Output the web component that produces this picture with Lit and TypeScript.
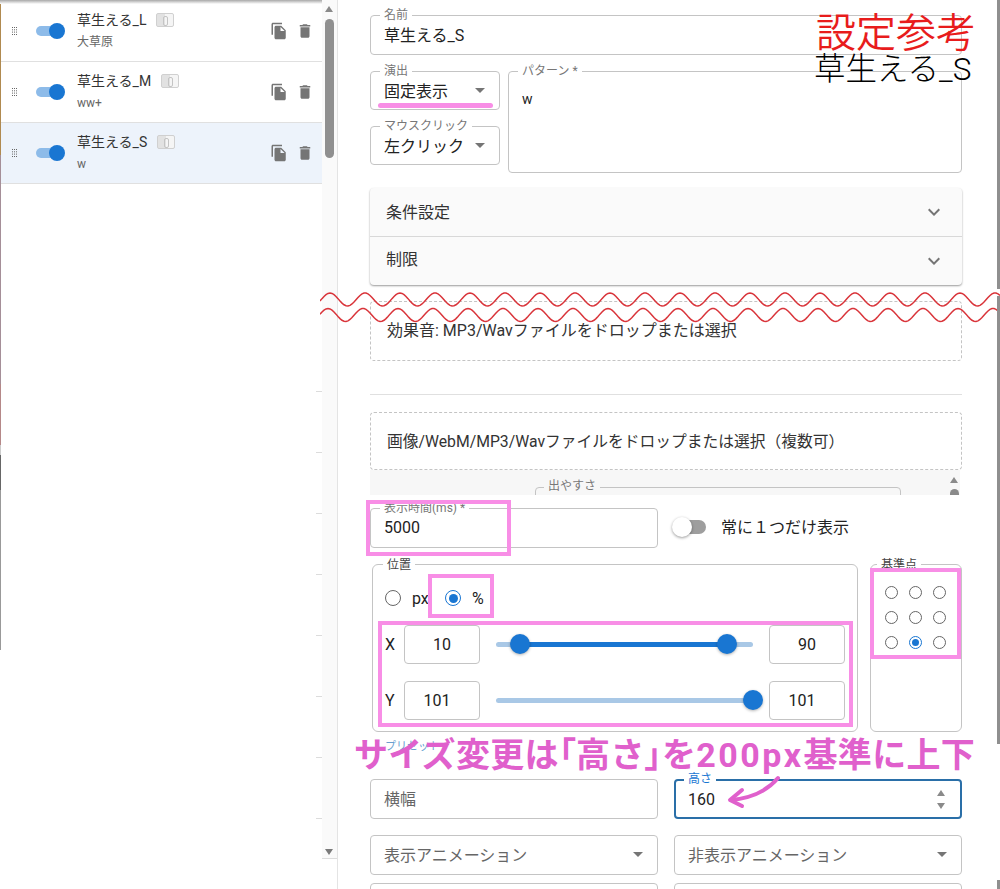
import { LitElement, html, css, svg, nothing } from 'lit'
import { customElement } from 'lit/decorators.js'

const rows = [
  { name: '草生える_L', sub: '大草原', active: false },
  { name: '草生える_M', sub: 'ww+', active: false },
  { name: '草生える_S', sub: 'w', active: true },
]

const wave = (center: number, peakAt: number) => {
  let d = ''
  for (let x = 320; x <= 1000; x += 2) {
    const y = center - 6.5 * Math.cos(((x - peakAt) / 35) * Math.PI * 2)
    d += `${d ? 'L' : 'M'}${x - 320} ${(y - 288).toFixed(2)}`
  }
  return d
}

const sliderPos = (v: number) => Math.min(100, v * 1.0075 - 0.74)

@customElement('app-root')
export class AppRoot extends LitElement {
  static styles = css`
    :host {
      display: flex;
      position: relative;
      width: 1000px;
      height: 889px;
      overflow: hidden;
      background: #fff;
      color: #222;
      font-family: Roboto, "Noto Sans CJK JP", sans-serif;
      font-size: 16px;
    }
    * { box-sizing: border-box; }

    /* left list */
    .side {
      position: relative;
      display: flex;
      width: 338px;
      height: 889px;
      flex: none;
      border-right: 1px solid #e4e4e4;
    }
    .side::before {
      content: '';
      position: absolute;
      top: 0;
      left: 0;
      width: 322px;
      height: 4px;
      background: linear-gradient(#a8a8a8, #fff);
    }
    .edge {
      position: absolute;
      top: 4px;
      left: 0;
      width: 1px;
      height: 646px;
      background: linear-gradient(#b08a50 0 151px, #a58f98 151px 380px, #b58888 380px 441px, #ccc 441px 451px, #666 451px 486px, #999 486px);
    }
    .list {
      width: 322px;
      padding-top: 1px;
      display: flex;
      flex-direction: column;
    }
    .row {
      display: flex;
      align-items: center;
      height: 61px;
      flex: none;
      padding: 0 8px 0 12px;
      border-bottom: 1px solid #e0e0e0;
    }
    .row.active { background: #edf3fb; }
    .grip { width: 5px; height: 8px; flex: none; }
    .switch {
      position: relative;
      width: 29px;
      height: 16px;
      margin-left: 19px;
      flex: none;
    }
    .switch .track {
      position: absolute;
      top: 3px;
      left: 0;
      width: 24px;
      height: 10px;
      border-radius: 5px;
      background: #8dbbe9;
    }
    .switch .knob {
      position: absolute;
      top: 0;
      right: 0;
      width: 16px;
      height: 16px;
      border-radius: 50%;
      background: #1976d2;
    }
    .row-text { margin-left: 12px; margin-top: -2px; }
    .row-name {
      display: flex;
      align-items: center;
      gap: 10px;
      font-size: 14px;
      line-height: 20px;
      color: #333;
    }
    .row-sub { font-size: 12px; line-height: 16px; margin-top: 4px; color: #666; }
    .thumb {
      position: relative;
      width: 18px;
      height: 14px;
      border: 1px solid #d0d0d0;
      border-radius: 2px;
      background: linear-gradient(90deg, #e2e2e2 0 50%, #f5f5f5 50%);
    }
    .thumb::after {
      content: '';
      position: absolute;
      left: 6px;
      top: 2px;
      width: 3px;
      height: 8px;
      border: 1px solid #c4c4c4;
      border-radius: 2px;
    }
    .actions { display: flex; gap: 8px; margin-left: auto; }
    .actions svg { width: 18px; height: 18px; fill: #757575; display: block; }
    .ticks { display: flex; flex-direction: column; align-items: flex-end; margin-top: 207px; }
    .ticks span { width: 6px; height: 1px; margin-bottom: 60px; background: #dcdcdc; flex: none; }
    .rail {
      width: 15px;
      height: 859px;
      display: flex;
      flex-direction: column;
      align-items: center;
      padding: 6px 1px 3px 0;
      background: #fafafa;
      border-bottom: 1px solid #dcdcdc;
    }
    .arrow-up, .arrow-down {
      width: 0;
      height: 0;
      border-left: 4.5px solid transparent;
      border-right: 4.5px solid transparent;
    }
    .arrow-up { border-bottom: 6px solid #8a8a8a; }
    .arrow-down { border-top: 6px solid #7a7a7a; margin-top: auto; }
    .rail-thumb { width: 9px; height: 139px; margin-top: 7px; border-radius: 5px; background: #909090; }

    /* main form */
    .main { width: 592px; margin-left: 32px; padding-top: 15px; flex: none; }
    .field {
      position: relative;
      display: flex;
      align-items: center;
      height: 40px;
      padding: 0 13px 2px;
      border: 1px solid #c4c4c4;
      border-radius: 4px;
      background: #fff;
      color: #222;
    }
    .label {
      position: absolute;
      top: -7px;
      left: 9px;
      padding: 0 4px;
      font-size: 12px;
      line-height: 13px;
      color: #777;
      background: #fff;
      white-space: nowrap;
    }
    .placeholder { color: #666; }
    .caret {
      position: absolute;
      right: 14px;
      top: 16px;
      width: 0;
      height: 0;
      border-left: 5px solid transparent;
      border-right: 5px solid transparent;
      border-top: 5px solid #757575;
    }
    .pair { display: grid; grid-template-columns: 288px 288px; gap: 16px; }
    .mid { display: grid; grid-template-columns: 130px 454px; gap: 8px; margin-top: 16px; }
    .mid-left { display: flex; flex-direction: column; gap: 16px; }
    .mid-left .field { height: 39px; }
    .pattern { height: 102px; align-items: flex-start; padding-top: 19px; font-size: 14px; }

    .accordion {
      margin-top: 15px;
      border-radius: 4px;
      background: #fafafa;
      box-shadow: 0 1px 2px rgba(0, 0, 0, 0.4);
    }
    .acc-row {
      display: flex;
      align-items: center;
      justify-content: space-between;
      height: 48px;
      padding: 0 16px;
      color: #333;
    }
    .acc-row span { margin-bottom: 2px; }
    .acc-row + .acc-row { border-top: 1px solid #d8d8d8; height: 49px; }
    .acc-row + .acc-row span { margin-bottom: 6px; }
    .acc-row svg { width: 24px; height: 24px; fill: #757575; }

    .drop {
      display: flex;
      align-items: center;
      margin-top: 16px;
      height: 60px;
      padding: 0 16px 4px;
      border: 1px dashed #c4c4c4;
      border-radius: 4px;
      color: #333;
    }
    .divider { height: 1px; margin-top: 33px; background: #e0e0e0; }
    .drop.images { margin-top: 17px; height: 58px; padding-bottom: 2px; font-size: 15.75px; }
    .panel {
      position: relative;
      width: 590px;
      height: 25px;
      overflow: hidden;
      background: #f7f7f7;
    }
    .panel-box {
      position: absolute;
      top: 17px;
      left: 165px;
      width: 366px;
      height: 40px;
      border: 1px solid #c4c4c4;
      border-radius: 4px;
    }
    .panel-box .label { background: #f7f7f7; top: -8px; left: 8px; }
    .panel .arrow-up { position: absolute; top: 7px; left: 580px; }
    .panel-dot {
      position: absolute;
      top: 19px;
      left: 580px;
      width: 9px;
      height: 12px;
      border-radius: 5px;
      background: #8a8a8a;
    }

    .timing { margin-top: 13px; }
    .always { display: flex; align-items: center; padding-bottom: 2px; }
    .off-switch { position: relative; width: 36px; height: 20px; margin-left: -2px; flex: none; }
    .off-switch .track {
      position: absolute;
      top: 3px;
      left: 8px;
      width: 26px;
      height: 14px;
      border-radius: 7px;
      background: #9e9e9e;
    }
    .off-switch .knob {
      position: absolute;
      top: 0;
      left: 0;
      width: 20px;
      height: 20px;
      border-radius: 50%;
      background: #fff;
      box-shadow: 0 1px 3px rgba(0, 0, 0, 0.4);
    }
    .always span { margin: 0 0 2px 13px; }

    .groups { display: flex; gap: 12px; margin: 16px 0 0 2px; }
    .group {
      position: relative;
      height: 168px;
      border: 1px solid #c4c4c4;
      border-radius: 6px;
    }
    .group .label { color: #444; left: 10px; top: -6px; }
    .group.position { width: 486px; padding: 15px 12px 0; }
    .group.anchor { width: 93px; padding: 21px 0 0 14px; }
    .group.anchor .label { left: 6px; }
    .units { display: flex; align-items: center; height: 36px; margin-bottom: 9px; }
    .unit { display: flex; align-items: center; width: 60px; }
    .unit span { margin-left: 11px; }
    .radio {
      position: relative;
      display: block;
      width: 16px;
      height: 16px;
      flex: none;
      border: 1.5px solid #666;
      border-radius: 50%;
    }
    .radio.on { border-color: #1976d2; }
    .radio.on::after {
      content: '';
      position: absolute;
      inset: 2.5px;
      border-radius: 50%;
      background: #1976d2;
    }
    .coord { display: flex; align-items: center; height: 39px; }
    .coord + .coord { margin-top: 17px; }
    .axis { width: 19px; flex: none; }
    .num { width: 76px; height: 39px; flex: none; justify-content: center; padding: 0; }
    .num.wide { padding-right: 10px; }
    .slider { position: relative; width: 257px; height: 5px; margin: 0 16px; flex: none; border-radius: 3px; background: #a9c8e6; }
    .fill { position: absolute; top: 0; height: 5px; background: #1976d2; }
    .knob-s {
      position: absolute;
      top: -8px;
      width: 20px;
      height: 20px;
      margin-left: -10px;
      border-radius: 50%;
      background: #1976d2;
      box-shadow: 0 1px 3px rgba(0, 0, 0, 0.3);
    }
    .anchor-grid { display: grid; grid-template-columns: repeat(3, 13px); grid-auto-rows: 13px; column-gap: 11px; row-gap: 12px; }
    .anchor-grid .radio { width: 13px; height: 13px; border-width: 1px; }
    .anchor-grid .radio.on { border-width: 1.5px; }
    .anchor-grid .radio.on::after { inset: 2px; }

    .size-legend { height: 47px; padding: 5px 0 0 15px; font-size: 11px; color: #6a9fd0; }
    .focused { border: 2px solid #2a6fa8; padding: 0 12px; }
    .focused .label { color: #1976d2; top: -8px; left: 8px; }
    .spin { position: absolute; right: 15px; top: 9px; display: flex; flex-direction: column; gap: 7px; }
    .spin i { display: block; width: 0; height: 0; border-left: 4.5px solid transparent; border-right: 4.5px solid transparent; }
    .spin i:first-child { border-bottom: 6px solid #8a8a8a; }
    .spin i:last-child { border-top: 6px solid #8a8a8a; }
    .pair.anim { margin-top: 16px; }
    .pair.more { margin-top: 8px; }

    /* annotations over the capture */
    .mark { position: absolute; border: 4px solid #f88ee6; pointer-events: none; }
    .mark-time { left: 366px; top: 500px; width: 145px; height: 56px; }
    .mark-unit { left: 428px; top: 574px; width: 66px; height: 44px; }
    .mark-xy { left: 378px; top: 621px; width: 475px; height: 106px; }
    .mark-anchor { left: 870px; top: 568px; width: 91px; height: 91px; }
    .underline { position: absolute; left: 378px; top: 103px; width: 115px; height: 5px; border-radius: 3px; background: #f88ee6; }
    .note-title {
      position: absolute;
      left: 816px;
      top: 8px;
      font-size: 40px;
      line-height: 52px;
      font-weight: 350;
      color: #e81c1c;
      white-space: nowrap;
    }
    .note-name {
      position: absolute;
      left: 814px;
      top: 50px;
      font-size: 31.5px;
      line-height: 40px;
      font-weight: 300;
      color: #000;
      white-space: nowrap;
    }
    .note-size {
      position: absolute;
      left: 354px;
      top: 733px;
      font-size: 34px;
      line-height: 44px;
      font-weight: 700;
      letter-spacing: 0.3px;
      color: #e060cc;
      white-space: nowrap;
    }
    .note-size .br { font-feature-settings: "palt"; }
    .note-size .num-text { letter-spacing: 2.5px; }
    .note-arrow { position: absolute; left: 722px; top: 770px; width: 64px; height: 40px; fill: none; stroke: #e060cc; stroke-width: 4; stroke-linecap: round; stroke-linejoin: round; }
    .waves { position: absolute; left: 320px; top: 288px; width: 680px; height: 36px; fill: none; stroke: #d9343a; stroke-width: 1.5; }
    .bar { position: absolute; right: 0; width: 3px; background: #8f8f8f; }
    .bar-a { top: 0; height: 289px; }
    .bar-b { top: 296px; height: 448px; }
    .bar-c { top: 880px; height: 9px; }
  `

  private grip() {
    return svg`<svg class="grip" viewBox="0 0 5 8" fill="#666">
      ${[0, 2, 4].map((x) => [0, 2.3, 4.6, 7].map((y) => svg`<rect x=${x} y=${y} width="1" height="1"></rect>`))}
    </svg>`
  }

  private renderRow(r: { name: string; sub: string; active: boolean }) {
    return html`
      <div class="row ${r.active ? 'active' : ''}">
        ${this.grip()}
        <div class="switch"><div class="track"></div><div class="knob"></div></div>
        <div class="row-text">
          <div class="row-name">${r.name}<span class="thumb"></span></div>
          <div class="row-sub">${r.sub}</div>
        </div>
        <div class="actions">
          <svg viewBox="0 0 24 24"><path d="M16 1H4c-1.1 0-2 .9-2 2v14h2V3h12V1zm-1 4 6 6v10c0 1.1-.9 2-2 2H7.99C6.89 23 6 22.1 6 21l.01-14c0-1.1.89-2 1.99-2h7zm-1 7h5.5L14 6.5V12z"></path></svg>
          <svg viewBox="0 0 24 24"><path d="M6 19c0 1.1.9 2 2 2h8c1.1 0 2-.9 2-2V7H6v12zM19 4h-3.5l-1-1h-5l-1 1H5v2h14V4z"></path></svg>
        </div>
      </div>
    `
  }

  private field(label: string | null, value: string, caret = false, cls = '') {
    return html`
      <div class="field ${cls}">
        ${label ? html`<span class="label">${label}</span>` : nothing}
        <span>${value}</span>
        ${caret ? html`<span class="caret"></span>` : nothing}
      </div>
    `
  }

  private selectHint(value: string) {
    return html`<div class="field"><span class="placeholder">${value}</span><span class="caret"></span></div>`
  }

  private coord(axis: string, a: number, b: number, active: boolean) {
    const wide = a > 100
    return html`
      <div class="coord">
        <span class="axis">${axis}</span>
        <div class="field num ${wide ? 'wide' : ''}">${a}</div>
        <div class="slider">
          ${active
            ? html`
                <div class="fill" style="left:${sliderPos(a)}%;right:${100 - sliderPos(b)}%"></div>
                <div class="knob-s" style="left:${sliderPos(a)}%"></div>
              `
            : nothing}
          <div class="knob-s" style="left:${sliderPos(b)}%"></div>
        </div>
        <div class="field num ${wide ? 'wide' : ''}">${b}</div>
      </div>
    `
  }

  render() {
    return html`
      <aside class="side">
        <div class="list">
          ${rows.map((r) => this.renderRow(r))}
          <div class="ticks">${[0, 1, 2, 3, 4, 5, 6, 7].map(() => html`<span></span>`)}</div>
        </div>
        <div class="rail">
          <div class="arrow-up"></div>
          <div class="rail-thumb"></div>
          <div class="arrow-down"></div>
        </div>
        <div class="edge"></div>
      </aside>

      <main class="main">
        ${this.field('名前', '草生える_S')}
        <div class="mid">
          <div class="mid-left">
            ${this.field('演出', '固定表示', true)}
            ${this.field('マウスクリック', '左クリック', true)}
          </div>
          ${this.field('パターン *', 'w', false, 'pattern')}
        </div>

        <div class="accordion">
          ${['条件設定', '制限'].map(
            (t) => html`
              <div class="acc-row">
                <span>${t}</span>
                <svg viewBox="0 0 24 24"><path d="M16.59 8.59 12 13.17 7.41 8.59 6 10l6 6 6-6z"></path></svg>
              </div>
            `,
          )}
        </div>

        <div class="drop">効果音: MP3/Wavファイルをドロップまたは選択</div>
        <div class="divider"></div>
        <div class="drop images">画像/WebM/MP3/Wavファイルをドロップまたは選択（複数可）</div>
        <div class="panel">
          <div class="panel-box"><span class="label">出やすさ</span></div>
          <div class="arrow-up"></div>
          <div class="panel-dot"></div>
        </div>

        <div class="pair timing">
          ${this.field('表示時間(ms) *', '5000')}
          <div class="always">
            <div class="off-switch"><div class="track"></div><div class="knob"></div></div>
            <span>常に１つだけ表示</span>
          </div>
        </div>

        <div class="groups">
          <div class="group position">
            <span class="label">位置</span>
            <div class="units">
              <div class="unit"><i class="radio"></i><span>px</span></div>
              <div class="unit"><i class="radio on"></i><span>%</span></div>
            </div>
            ${this.coord('X', 10, 90, true)}
            ${this.coord('Y', 101, 101, false)}
          </div>
          <div class="group anchor">
            <span class="label">基準点</span>
            <div class="anchor-grid">
              ${[0, 1, 2, 3, 4, 5, 6, 7, 8].map((i) => html`<i class="radio ${i === 7 ? 'on' : ''}"></i>`)}
            </div>
          </div>
        </div>

        <div class="size-legend">プリセット</div>
        <div class="pair">
          <div class="field"><span class="placeholder">横幅</span></div>
          <div class="field focused">
            <span class="label">高さ</span>
            <span>160</span>
            <span class="spin"><i></i><i></i></span>
          </div>
        </div>
        <div class="pair anim">
          ${this.selectHint('表示アニメーション')}
          ${this.selectHint('非表示アニメーション')}
        </div>
        <div class="pair more">
          <div class="field"></div>
          <div class="field"></div>
        </div>
      </main>

      <div class="underline"></div>
      <div class="note-title">設定参考</div>
      <div class="note-name">草生える_S</div>
      <svg class="waves" viewBox="0 0 680 36">
        <path d=${wave(299.5, 330)}></path>
        <path d=${wave(315, 328)}></path>
      </svg>
      <div class="mark mark-time"></div>
      <div class="mark mark-unit"></div>
      <div class="mark mark-xy"></div>
      <div class="mark mark-anchor"></div>
      <div class="note-size">サイズ変更は<span class="br">「</span>高さ<span class="br">」</span>を<span class="num-text">200px</span>基準に上下</div>
      <svg class="note-arrow" viewBox="0 0 64 40">
        <path d="M56 8C46 20 30 28 9 30"></path>
        <path d="M20 20L8 30L20 36"></path>
      </svg>
      <div class="bar bar-a"></div>
      <div class="bar bar-b"></div>
      <div class="bar bar-c"></div>
    `
  }
}
